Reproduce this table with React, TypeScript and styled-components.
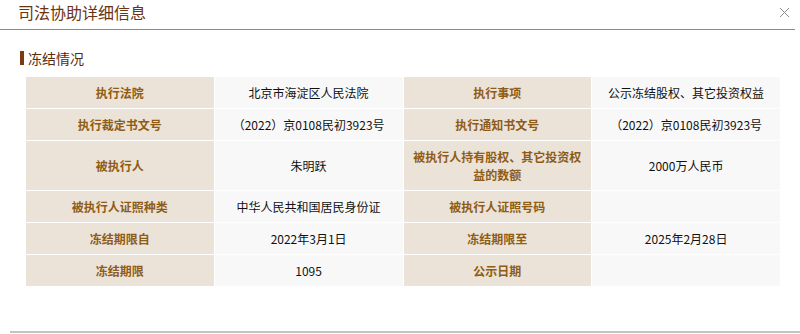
import styled, { createGlobalStyle } from "styled-components";

const GlobalStyle = createGlobalStyle`
  html, body {
    margin: 0;
    padding: 0;
    background: #fff;
    font-family: "Noto Sans CJK SC", "Noto Sans", sans-serif;
  }
`;

const Dialog = styled.div`
  width: 800px;
  height: 334px;
  display: flex;
  flex-direction: column;
  background: #fff;
  overflow: hidden;
`;

const Header = styled.div`
  height: 30px;
  display: flex;
  align-items: center;
  justify-content: space-between;
  padding: 0 5px 0 18px;
  margin-right: 5px;
  border-bottom: 1px solid #8c8c8c;
  box-sizing: border-box;
`;

const Title = styled.h1`
  margin: 0;
  font-size: 16px;
  font-weight: normal;
  color: #6b3410;
  line-height: 20px;
  margin-top: -6px;
`;

const Close = styled.button`
  border: 0;
  background: none;
  padding: 0;
  width: 12px;
  height: 12px;
  margin-top: -4px;
  cursor: pointer;
  display: flex;
  align-items: center;
  justify-content: center;
`;

const Section = styled.div`
  padding: 19px 0 0 20px;
`;

const SectionTitle = styled.h2`
  margin: 0;
  display: flex;
  align-items: center;
  gap: 4px;
  font-size: 14px;
  font-weight: normal;
  color: #5a2c0c;
  line-height: 18px;

  &::before {
    content: "";
    display: block;
    width: 4px;
    height: 14px;
    background: #7a3a12;
  }
`;

const Table = styled.table`
  margin: 9px 0 0 5px;
  width: 756px;
  border-collapse: collapse;
  table-layout: fixed;
  border: 1px solid #e6e6e6;
`;

const Cell = styled.td<{ $label?: boolean }>`
  height: 31px;
  padding: 0 8px;
  text-align: center;
  vertical-align: middle;
  border: 1px solid #fff;
  font-size: 12px;
  line-height: 18px;
  background: ${(p) => (p.$label ? "#ebe3d8" : "#f8f8f8")};
  color: ${(p) => (p.$label ? "#8f5c15" : "#111")};
  font-weight: ${(p) => (p.$label ? "bold" : "normal")};
`;

const TallRow = styled.tr`
  td {
    height: 49px;
  }
`;

const Footer = styled.div`
  margin-top: auto;
  margin-left: 10px;
  height: 2px;
  margin-bottom: 1px;
  background: #c4c4c4;
`;

type Pair = [string, string, string, string];

const rows: Pair[] = [
  ["执行法院", "北京市海淀区人民法院", "执行事项", "公示冻结股权、其它投资权益"],
  ["执行裁定书文号", "（2022）京0108民初3923号", "执行通知书文号", "（2022）京0108民初3923号"],
  ["被执行人", "朱明跃", "被执行人持有股权、其它投资权益的数额", "2000万人民币"],
  ["被执行人证照种类", "中华人民共和国居民身份证", "被执行人证照号码", ""],
  ["冻结期限自", "2022年3月1日", "冻结期限至", "2025年2月28日"],
  ["冻结期限", "1095", "公示日期", ""],
];

function Row({ data, tall }: { data: Pair; tall?: boolean }) {
  const cells = (
    <>
      <Cell $label>{data[0]}</Cell>
      <Cell>{data[1]}</Cell>
      <Cell $label>{data[2]}</Cell>
      <Cell>{data[3]}</Cell>
    </>
  );
  return tall ? <TallRow>{cells}</TallRow> : <tr>{cells}</tr>;
}

export default function App() {
  return (
    <>
      <GlobalStyle />
      <Dialog>
        <Header>
          <Title>司法协助详细信息</Title>
          <Close aria-label="关闭">
            <svg width="11" height="11" viewBox="0 0 11 11">
              <path d="M1 1L10 10M10 1L1 10" stroke="#8a8a8a" strokeWidth="1" fill="none" />
            </svg>
          </Close>
        </Header>
        <Section>
          <SectionTitle>冻结情况</SectionTitle>
          <Table>
            <tbody>
              {rows.map((r, i) => (
                <Row key={i} data={r} tall={i === 2} />
              ))}
            </tbody>
          </Table>
        </Section>
        <Footer />
      </Dialog>
    </>
  );
}
